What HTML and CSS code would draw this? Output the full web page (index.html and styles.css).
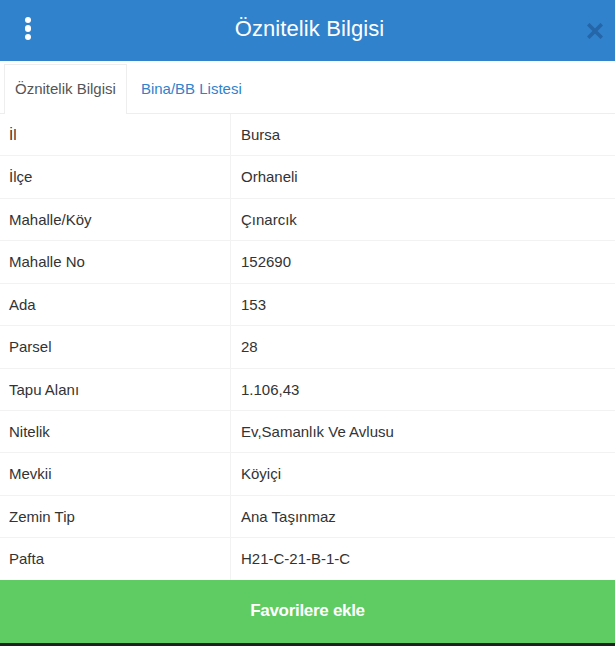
FILE: index.html
```html
<!DOCTYPE html>
<html lang="tr">
<head>
<meta charset="utf-8">
<title>Öznitelik Bilgisi</title>
<link rel="stylesheet" href="styles.css">
</head>
<body>
<div class="panel">
  <header class="panel-header">
    <span class="menu-btn" aria-label="Menü">
      <i></i><i></i><i></i>
    </span>
    <h1 class="panel-title">Öznitelik Bilgisi</h1>
    <span class="close-btn" aria-label="Kapat">
      <svg width="16" height="16" viewBox="0 0 16 16"><path d="M2.5 2.5 L13.5 13.5 M13.5 2.5 L2.5 13.5" stroke="#2466a8" stroke-width="3.6" stroke-linecap="square"/></svg>
    </span>
  </header>

  <nav class="tabs">
    <a class="tab active">Öznitelik Bilgisi</a>
    <a class="tab">Bina/BB Listesi</a>
  </nav>

  <table class="attr-table">
    <tbody>
      <tr><td>İl</td><td>Bursa</td></tr>
      <tr><td>İlçe</td><td>Orhaneli</td></tr>
      <tr><td>Mahalle/Köy</td><td>Çınarcık</td></tr>
      <tr><td>Mahalle No</td><td>152690</td></tr>
      <tr><td>Ada</td><td>153</td></tr>
      <tr><td>Parsel</td><td>28</td></tr>
      <tr><td>Tapu Alanı</td><td>1.106,43</td></tr>
      <tr><td>Nitelik</td><td>Ev,Samanlık Ve Avlusu</td></tr>
      <tr><td>Mevkii</td><td>Köyiçi</td></tr>
      <tr><td>Zemin Tip</td><td>Ana Taşınmaz</td></tr>
      <tr><td>Pafta</td><td>H21-C-21-B-1-C</td></tr>
    </tbody>
  </table>

  <button class="fav-btn">Favorilere ekle</button>
</div>
</body>
</html>
```

FILE: styles.css
```css
html, body {
  margin: 0;
  padding: 0;
}

body {
  background: #1e2020;
  font-family: "Liberation Sans", Arial, sans-serif;
  color: #333;
  width: 615px;
  height: 646px;
  overflow: hidden;
}

.panel {
  background: #fff;
  display: flex;
  flex-direction: column;
}

/* header bar */
.panel-header {
  height: 61px;
  background: #3182cc;
  display: flex;
  align-items: center;
  justify-content: space-between;
  padding: 0 10px 0 22px;
  box-sizing: border-box;
}

.menu-btn {
  width: 12px;
  display: flex;
  flex-direction: column;
  align-items: center;
  gap: 2px;
  margin-top: -4px;
}

.menu-btn i {
  width: 6.5px;
  height: 6.5px;
  border-radius: 50%;
  background: #fff;
  display: block;
}

.panel-title {
  margin: 0 0 4px 0;
  font-size: 22px;
  font-weight: normal;
  color: #fff;
  letter-spacing: 0.1px;
}

.close-btn {
  width: 20px;
  height: 20px;
  display: flex;
  align-items: center;
  justify-content: center;
}

/* tabs */
.tabs {
  display: flex;
  padding: 3px 4px 0 4px;
  border-bottom: 1px solid #eee;
  height: 49px;
  box-sizing: content-box;
}

.tab {
  font-size: 15px;
  line-height: 20px;
  padding: 14px 10px 14px 10px;
  color: #3182cc;
  border: 1px solid transparent;
  border-bottom: none;
  margin-bottom: -1px;
}

.tab + .tab {
  margin-left: 3px;
}

.tab.active {
  color: #555;
  background: #fff;
  border-color: #eee;
  padding-bottom: 15px;
}

/* attribute table */
.attr-table {
  width: 100%;
  border-collapse: collapse;
  font-size: 15px;
  line-height: 1.42857;
}

.attr-table td {
  padding: 10px 9px;
  border-top: 1px solid #f2f2f2;
  vertical-align: top;
}

.attr-table tr:first-child td {
  border-top: none;
}

.attr-table td:first-child {
  width: 212px;
  border-right: 1px solid #f2f2f2;
}

.attr-table td:last-child {
  padding-left: 10px;
}

/* add-to-favourites button */
.fav-btn {
  border: none;
  margin: 0;
  height: 63px;
  background: #5fcb63;
  color: #fff;
  font-family: "Liberation Sans", Arial, sans-serif;
  font-size: 17px;
  font-weight: bold;
  letter-spacing: -0.3px;
  width: 100%;
}
```
